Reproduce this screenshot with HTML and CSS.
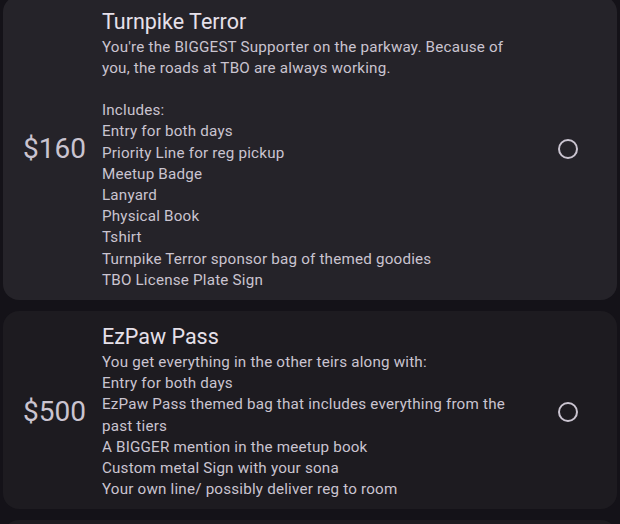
FILE: index.html
```html
<!DOCTYPE html>
<html lang="en">
<head>
<meta charset="utf-8">
<title>Sponsor tiers</title>
<link rel="stylesheet" href="styles.css">
</head>
<body>
<div class="list">
  <div class="tier tier-active">
    <div class="price">$160</div>
    <div class="content">
      <div class="title">Turnpike Terror</div>
      <div class="desc">You're the BIGGEST Supporter on the parkway. Because of you, the roads at TBO are always working.

Includes:
Entry for both days
Priority Line for reg pickup
Meetup Badge
Lanyard
Physical Book
Tshirt
Turnpike Terror sponsor bag of themed goodies
TBO License Plate Sign</div>
    </div>
    <div class="radio"></div>
  </div>
  <div class="tier">
    <div class="price">$500</div>
    <div class="content">
      <div class="title">EzPaw Pass</div>
      <div class="desc">You get everything in the other teirs along with:
Entry for both days
EzPaw Pass themed bag that includes everything from the past tiers
A BIGGER mention in the meetup book
Custom metal Sign with your sona
Your own line/ possibly deliver reg to room</div>
    </div>
    <div class="radio"></div>
  </div>
  <div class="tier tier-empty"></div>
</div>
</body>
</html>
```

FILE: styles.css
```css
html, body {
  margin: 0;
  padding: 0;
  background: #141218;
  overflow: hidden;
}

body {
  font-family: Roboto, "Noto Sans", sans-serif;
  color: #cac4d0;
}

.list {
  display: flex;
  flex-direction: column;
  gap: 11px;
  padding: 0 3px;
  margin-top: -4.5px;
}

.tier {
  display: flex;
  align-items: center;
  background: #1d1b20;
  border-radius: 16px;
  padding: 12px 39px 9px 20px;
}

.tier-active {
  background: #252329;
}

.tier-empty {
  height: 80px;
}

.price {
  font-size: 28px;
  line-height: 36px;
  color: #cac4d0;
  margin-right: 16px;
  flex: none;
}

.content {
  flex: 1;
  min-width: 0;
  margin-right: 26px;
}

.title {
  font-size: 21.5px;
  line-height: 28px;
  color: #e6e0e9;
  margin-bottom: 1px;
}

.desc {
  font-size: 15.2px;
  line-height: 21.2px;
  letter-spacing: 0.2px;
  white-space: pre-line;
}

.radio {
  flex: none;
  width: 16px;
  height: 16px;
  border: 2px solid #cac4d0;
  border-radius: 50%;
}
```
